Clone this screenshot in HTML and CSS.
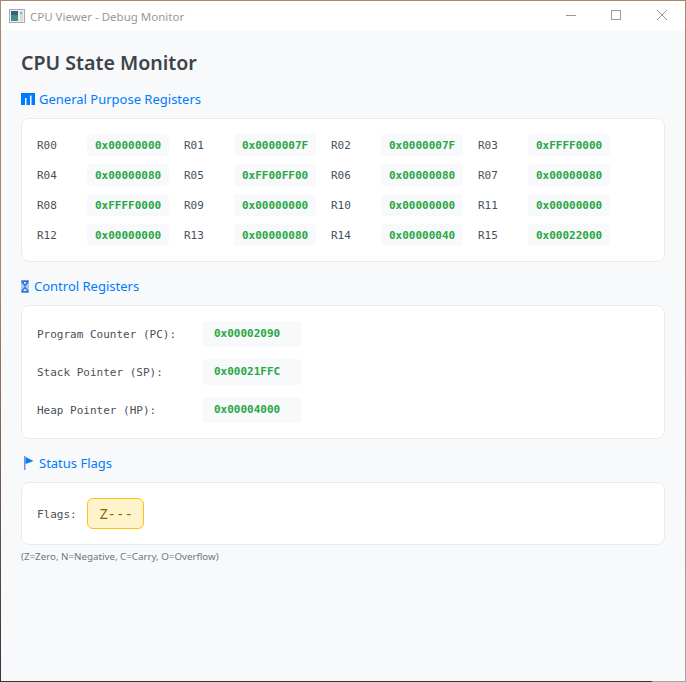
FILE: index.html
```html
<!DOCTYPE html>
<html lang="en">
<head>
<meta charset="utf-8">
<title>CPU Viewer - Debug Monitor</title>
<link rel="stylesheet" href="styles.css">
</head>
<body>
<div class="window">
  <header class="titlebar">
    <svg class="app-icon" width="16" height="14" viewBox="0 0 16 14">
      <rect x="0.5" y="0.5" width="15" height="13" fill="#f0f0f0" stroke="#a8a8a8"/>
      <rect x="2" y="2" width="7" height="10" fill="#3f8f8a"/>
      <rect x="2" y="2" width="7" height="4" fill="#35607f"/>
      <rect x="11" y="2" width="3" height="10" fill="#d5dcd5"/>
      <rect x="11" y="3" width="2" height="2" fill="#8fb98f"/>
    </svg>
    <span class="title">CPU Viewer - Debug Monitor</span>
    <div class="controls">
      <svg width="10" height="10" viewBox="0 0 10 10"><path d="M0 5.5H10" stroke="#999" fill="none"/></svg>
      <svg width="10" height="10" viewBox="0 0 10 10"><rect x="0.5" y="0.5" width="9" height="9" stroke="#999" fill="none"/></svg>
      <svg class="close" width="10" height="10" viewBox="0 0 10 10"><path d="M0 0L10 10M10 0L0 10" stroke="#999" fill="none"/></svg>
    </div>
  </header>
  <main class="content">
    <h1>CPU State Monitor</h1>

    <h2 class="section-title first">
      <svg class="icon" width="14" height="12" viewBox="0 0 14 12"><path d="M0 0H14V12H10.5V2.5H9V12H5.5V5H4V12H0Z" fill="#007bff"/></svg>
      <span>General Purpose Registers</span>
    </h2>
    <section class="card registers">
      <div class="reg"><span class="reg-name">R00</span><span class="chip">0x00000000</span></div>
      <div class="reg"><span class="reg-name">R01</span><span class="chip">0x0000007F</span></div>
      <div class="reg"><span class="reg-name">R02</span><span class="chip">0x0000007F</span></div>
      <div class="reg"><span class="reg-name">R03</span><span class="chip">0xFFFF0000</span></div>
      <div class="reg"><span class="reg-name">R04</span><span class="chip">0x00000080</span></div>
      <div class="reg"><span class="reg-name">R05</span><span class="chip">0xFF00FF00</span></div>
      <div class="reg"><span class="reg-name">R06</span><span class="chip">0x00000080</span></div>
      <div class="reg"><span class="reg-name">R07</span><span class="chip">0x00000080</span></div>
      <div class="reg"><span class="reg-name">R08</span><span class="chip">0xFFFF0000</span></div>
      <div class="reg"><span class="reg-name">R09</span><span class="chip">0x00000000</span></div>
      <div class="reg"><span class="reg-name">R10</span><span class="chip">0x00000000</span></div>
      <div class="reg"><span class="reg-name">R11</span><span class="chip">0x00000000</span></div>
      <div class="reg"><span class="reg-name">R12</span><span class="chip">0x00000000</span></div>
      <div class="reg"><span class="reg-name">R13</span><span class="chip">0x00000080</span></div>
      <div class="reg"><span class="reg-name">R14</span><span class="chip">0x00000040</span></div>
      <div class="reg"><span class="reg-name">R15</span><span class="chip">0x00022000</span></div>
    </section>

    <h2 class="section-title">
      <svg class="icon" width="8" height="13" viewBox="0 0 8 13"><rect width="8" height="13" fill="#a9c8f5"/><path d="M0.5 0.5H7.5V2.5L4 6.5L7.5 10.5V12.5H0.5V10.5L4 6.5L0.5 2.5Z" fill="#2a6fd0"/><path d="M2.5 2H5.5L4 4.5Z" fill="#e8f1ff"/><path d="M4 8.5L6 11H2Z" fill="#e8f1ff"/></svg>
      <span>Control Registers</span>
    </h2>
    <section class="card control">
      <div class="ctrl"><span class="ctrl-name">Program Counter (PC):</span><span class="chip wide">0x00002090</span></div>
      <div class="ctrl"><span class="ctrl-name">Stack Pointer (SP):</span><span class="chip wide">0x00021FFC</span></div>
      <div class="ctrl"><span class="ctrl-name">Heap Pointer (HP):</span><span class="chip wide">0x00004000</span></div>
    </section>

    <h2 class="section-title">
      <svg class="icon flag" width="11" height="14" viewBox="0 0 11 14"><path d="M1 0H2.5V14H1Z" fill="#7a8cf0"/><path d="M2.5 1L10.5 5L2.5 8Z" fill="#007bff"/></svg>
      <span>Status Flags</span>
    </h2>
    <section class="card flags">
      <span class="flags-label">Flags:</span>
      <span class="badge">Z---</span>
    </section>
    <p class="note">(Z=Zero, N=Negative, C=Carry, O=Overflow)</p>
  </main>
</div>
</body>
</html>
```

FILE: styles.css
```css
* { box-sizing: border-box; }
html, body { margin: 0; height: 100%; }
body {
  background:
    linear-gradient(#3a3038, #3a3038) 0 100% / 652px 1px no-repeat,
    linear-gradient(#a5a5a5, #a5a5a5) 100% 100% / 34px 1px no-repeat,
    linear-gradient(#a9876c, #a9876c 40%, #3a3038) 0 0 / 1px 100% no-repeat,
    linear-gradient(#a9876c, #a9876c 40%, #a5a5a5) 100% 0 / 1px 100% no-repeat,
    #a9876c;
  padding: 1px;
  font-family: "Noto Sans", "Open Sans", sans-serif;
  overflow: hidden;
}
.window {
  height: 100%;
  display: flex;
  flex-direction: column;
  background: #f8f9fa;
}
.titlebar {
  height: 30px;
  flex: none;
  background: #fff;
  display: flex;
  align-items: center;
  padding-left: 8px;
}
.app-icon { margin-right: 5px; }
.title { font-size: 11.5px; color: #999; }
.controls {
  margin-left: auto;
  display: flex;
  gap: 35px;
  padding-right: 18px;
  padding-bottom: 2px;
  align-items: flex-start;
}
.controls svg { display: block; }
.controls .close { margin-left: 1px; }
.content { flex: 1; padding: 18px 20px 0; }
h1 {
  margin: 0;
  font-size: 19.6px;
  line-height: 28px;
  font-weight: 600;
  color: #3d4349;
}
.section-title {
  margin: 0;
  display: flex;
  align-items: center;
  gap: 5px;
  font-size: 13px;
  line-height: 18px;
  font-weight: 400;
  color: #007bff;
  padding-top: 15px;
  padding-bottom: 10px;
}
.section-title.first { gap: 4px; padding-top: 13px; }
.flag { margin-left: 2px; }
.card {
  background: #fff;
  border: 1px solid #e9ecef;
  border-radius: 8px;
}
.registers {
  display: grid;
  grid-template-columns: repeat(4, 147px);
  row-gap: 8px;
  padding: 15px;
}
.reg { display: flex; align-items: center; }
.reg-name, .ctrl-name, .flags-label {
  font-family: "DejaVu Sans Mono", monospace;
  font-size: 11px;
  color: #495057;
}
.reg-name { width: 50px; }
.chip {
  font-family: "DejaVu Sans Mono", monospace;
  font-size: 11px;
  font-weight: 700;
  color: #28a745;
  background: #f8f9fa;
  border-radius: 4px;
  height: 22px;
  line-height: 23px;
  padding: 0 8px;
}
.control {
  display: flex;
  flex-direction: column;
  gap: 12px;
  padding: 15px;
}
.ctrl { display: flex; align-items: center; }
.ctrl-name { width: 165px; }
.chip.wide {
  width: 100px;
  height: 26px;
  line-height: 26px;
  padding: 0 12px;
}
.flags {
  display: flex;
  align-items: center;
  padding: 15px;
}
.flags-label { width: 50px; padding-top: 2px; }
.badge {
  font-family: "DejaVu Sans Mono", monospace;
  font-size: 14px;
  color: #856404;
  background: #fff3cd;
  border: 1px solid #ffc107;
  border-radius: 6px;
  width: 57px;
  height: 31px;
  line-height: 30px;
  padding-left: 1px;
  text-align: center;
}
.note {
  margin: 6px 0 0;
  font-size: 9.75px;
  line-height: 12px;
  color: #6c757d;
}
```
